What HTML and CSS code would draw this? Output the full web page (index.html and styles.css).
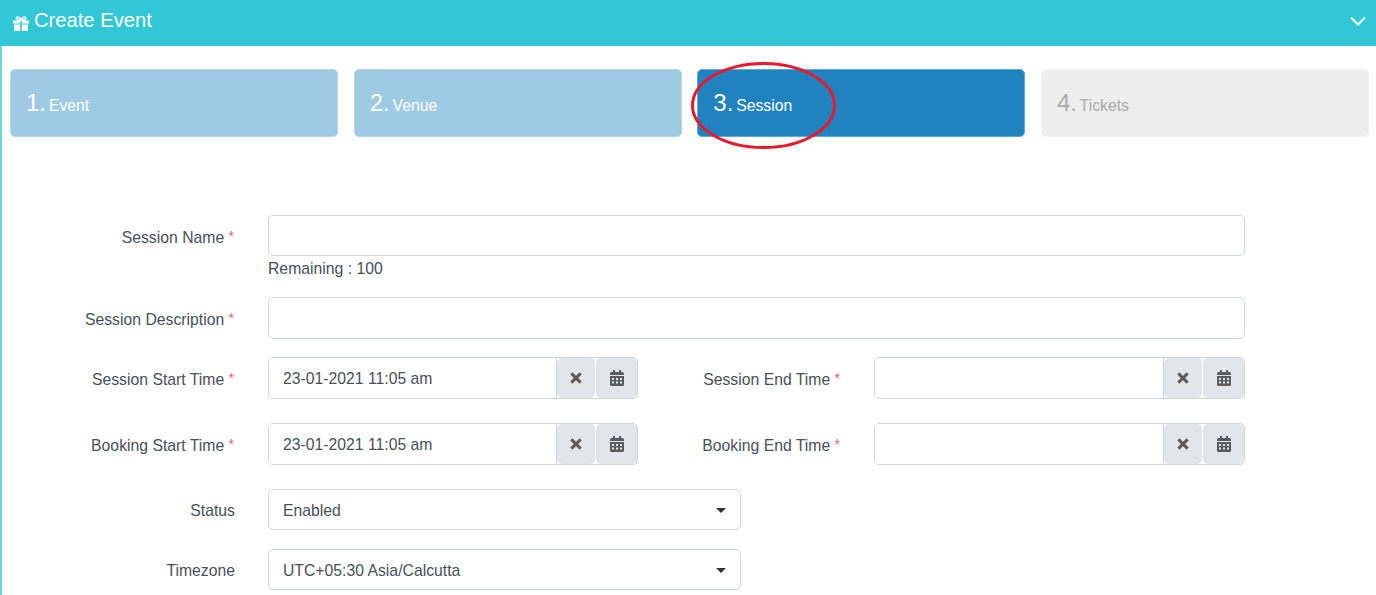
FILE: index.html
```html
<!DOCTYPE html>
<html lang="en">
<head>
<meta charset="utf-8">
<title>Create Event</title>
<link rel="stylesheet" href="styles.css">
</head>
<body>
<div class="panel">
  <header class="panel-head">
    <h1 class="panel-title">
      <svg class="gift" viewBox="0 0 16 15" aria-hidden="true"><path d="M0 4.4H7.2V7.6H0ZM8.8 4.4H16V7.6H8.8ZM1 8.6H7.2V15H2.2Q1 15 1 13.8ZM8.8 8.6H15V13.8Q15 15 13.8 15H8.8Z"/><path class="gift-bow" d="M8 4C6.8 1 3.8 0.2 3.3 2.2C2.9 3.8 5 4 8 4C11 4 13.1 3.8 12.7 2.2C12.2 0.2 9.2 1 8 4Z"/></svg>
      Create Event
    </h1>
    <svg class="chevron" viewBox="0 0 16 10" aria-hidden="true"><path d="M1 1.5L8 8.5L15 1.5"/></svg>
  </header>

  <nav class="steps">
    <div class="step step-done"><span class="step-num">1.</span> Event</div>
    <div class="step step-done"><span class="step-num">2.</span> Venue</div>
    <div class="step step-active"><span class="step-num">3.</span> Session</div>
    <div class="step step-todo"><span class="step-num">4.</span> Tickets</div>
  </nav>

  <svg class="annotation" viewBox="0 0 148 90" aria-hidden="true"><ellipse cx="73.5" cy="45.5" rx="71" ry="42"/></svg>

  <form class="form">
    <div class="row row-name">
      <label class="label">Session Name <i class="req">*</i></label>
      <div class="field-full">
        <input class="input input-name" type="text">
        <div class="help">Remaining : 100</div>
      </div>
    </div>
    <div class="row row-desc">
      <label class="label">Session Description <i class="req">*</i></label>
      <input class="input input-tall field-full" type="text">
    </div>
    <div class="row row-time">
      <label class="label">Session Start Time <i class="req">*</i></label>
      <div class="picker">
        <input class="picker-input" type="text" value="23-01-2021 11:05 am">
        <span class="addon addon-clear"><svg class="icon" viewBox="0 0 12 12"><path class="x" d="M2 2L10 10M10 2L2 10"/></svg></span>
        <span class="addon addon-cal"><svg class="icon" viewBox="0 0 14 16"><path d="M3 0H5V2H9V0H11V2H12.5Q14 2 14 3.5V5H0V3.5Q0 2 1.5 2H3ZM0 6H14V14.5Q14 16 12.5 16H1.5Q0 16 0 14.5ZM2 8V10H4V8ZM6 8V10H8V8ZM10 8V10H12V8ZM2 11.5V13.5H4V11.5ZM6 11.5V13.5H8V11.5ZM10 11.5V13.5H12V11.5Z" fill-rule="evenodd"/></svg></span>
      </div>
      <label class="label label-end">Session End Time <i class="req">*</i></label>
      <div class="picker picker-end">
        <input class="picker-input" type="text">
        <span class="addon addon-clear"><svg class="icon" viewBox="0 0 12 12"><path class="x" d="M2 2L10 10M10 2L2 10"/></svg></span>
        <span class="addon addon-cal"><svg class="icon" viewBox="0 0 14 16"><path d="M3 0H5V2H9V0H11V2H12.5Q14 2 14 3.5V5H0V3.5Q0 2 1.5 2H3ZM0 6H14V14.5Q14 16 12.5 16H1.5Q0 16 0 14.5ZM2 8V10H4V8ZM6 8V10H8V8ZM10 8V10H12V8ZM2 11.5V13.5H4V11.5ZM6 11.5V13.5H8V11.5ZM10 11.5V13.5H12V11.5Z" fill-rule="evenodd"/></svg></span>
      </div>
    </div>
    <div class="row row-time">
      <label class="label">Booking Start Time <i class="req">*</i></label>
      <div class="picker">
        <input class="picker-input" type="text" value="23-01-2021 11:05 am">
        <span class="addon addon-clear"><svg class="icon" viewBox="0 0 12 12"><path class="x" d="M2 2L10 10M10 2L2 10"/></svg></span>
        <span class="addon addon-cal"><svg class="icon" viewBox="0 0 14 16"><path d="M3 0H5V2H9V0H11V2H12.5Q14 2 14 3.5V5H0V3.5Q0 2 1.5 2H3ZM0 6H14V14.5Q14 16 12.5 16H1.5Q0 16 0 14.5ZM2 8V10H4V8ZM6 8V10H8V8ZM10 8V10H12V8ZM2 11.5V13.5H4V11.5ZM6 11.5V13.5H8V11.5ZM10 11.5V13.5H12V11.5Z" fill-rule="evenodd"/></svg></span>
      </div>
      <label class="label label-end">Booking End Time <i class="req">*</i></label>
      <div class="picker picker-end">
        <input class="picker-input" type="text">
        <span class="addon addon-clear"><svg class="icon" viewBox="0 0 12 12"><path class="x" d="M2 2L10 10M10 2L2 10"/></svg></span>
        <span class="addon addon-cal"><svg class="icon" viewBox="0 0 14 16"><path d="M3 0H5V2H9V0H11V2H12.5Q14 2 14 3.5V5H0V3.5Q0 2 1.5 2H3ZM0 6H14V14.5Q14 16 12.5 16H1.5Q0 16 0 14.5ZM2 8V10H4V8ZM6 8V10H8V8ZM10 8V10H12V8ZM2 11.5V13.5H4V11.5ZM6 11.5V13.5H8V11.5ZM10 11.5V13.5H12V11.5Z" fill-rule="evenodd"/></svg></span>
      </div>
    </div>
    <div class="row row-status">
      <label class="label label-plain">Status</label>
      <div class="select">Enabled<span class="caret"></span></div>
    </div>
    <div class="row">
      <label class="label label-plain">Timezone</label>
      <div class="select">UTC+05:30 Asia/Calcutta<span class="caret"></span></div>
    </div>
  </form>
</div>
</body>
</html>
```

FILE: styles.css
```css
* {
  box-sizing: border-box;
}

html,
body {
  margin: 0;
  height: 595px;
  overflow: hidden;
  background: #fff;
}

body {
  font-family: "Liberation Sans", Arial, sans-serif;
  font-size: 15.75px;
  color: #495057;
}

.panel {
  position: relative;
  height: 595px;
  border-left: 2px solid #6fd6e0;
}

.panel-head {
  display: flex;
  align-items: center;
  justify-content: space-between;
  height: 46px;
  margin-left: -2px;
  padding: 0 10px 5px 13px;
  background: #32c7d6;
  color: #fff;
}

.panel-title {
  display: flex;
  align-items: center;
  gap: 5px;
  margin: 0;
  font-size: 20.2px;
  font-weight: 400;
}

.gift {
  width: 16px;
  height: 15px;
  margin-top: 5px;
  fill: #fff;
}

.gift-bow {
  fill: none;
  stroke: #fff;
  stroke-width: 1.7;
}

.chevron {
  width: 16px;
  height: 10px;
  fill: none;
  stroke: #fff;
  stroke-width: 2;
}

.steps {
  display: flex;
  gap: 15.67px;
  padding: 23px 7px 0 8px;
}

.step {
  flex: 1;
  height: 68px;
  padding: 17px 15px 0;
  border: 1px solid transparent;
  border-radius: 5px;
  font-size: 15.75px;
  line-height: 32px;
  color: #fff;
}

.step-num {
  margin-right: -1.5px;
  font-size: 24px;
}

.step-done {
  background: #9ecae3;
  border-color: #b4d6ea;
}

.step-active {
  background: #2083c0;
  border-color: #5fa9d8;
}

.step-todo {
  background: #eeeeee;
  border-color: #f2f2f2;
  color: #aaaaaa;
}

.annotation {
  position: absolute;
  left: 688px;
  top: 60px;
  width: 148px;
  height: 90px;
  fill: none;
  stroke: #e8192c;
  stroke-width: 3;
}

.form {
  padding-top: 78px;
}

.row {
  display: flex;
  align-items: flex-start;
}

.row-name {
  height: 82px;
}

.row-desc {
  height: 60px;
}

.row-time {
  height: 66px;
}

.row-status {
  height: 60px;
}

.label {
  flex: none;
  width: 232px;
  margin-right: 34px;
  padding-top: 12px;
  line-height: 18px;
  text-align: right;
}

.label-plain {
  width: 233px;
  margin-right: 33px;
  padding-top: 13px;
}

.label-end {
  width: 202px;
  margin-right: 34px;
}

.req {
  font-style: normal;
  font-size: 14px;
  color: #e8606b;
  vertical-align: 2px;
}

.field-full {
  width: 977px;
}

.input {
  display: block;
  width: 100%;
  height: 41px;
  border: 1px solid #ced4da;
  border-radius: 5px;
  background: #fff;
}

.input-tall {
  height: 42px;
  width: 977px;
}

.help {
  margin-top: 4px;
  line-height: 18px;
}

.picker {
  display: flex;
  flex: none;
  width: 370px;
  height: 42px;
  border: 1px solid #ced4da;
  border-radius: 5px;
  overflow: hidden;
}

.picker-end {
  width: 371px;
}

.picker-input {
  flex: 1;
  min-width: 0;
  padding: 2px 14px 0;
  border: 0;
  border-right: 1px solid #ced4da;
  font: inherit;
  color: #495057;
  background: #fff;
}

.addon {
  display: flex;
  align-items: center;
  justify-content: center;
  flex: none;
  height: 100%;
  border-radius: 5px;
  background: #e1e5ec;
}

.addon-clear {
  width: 38px;
  margin-right: 1px;
}

.addon-cal {
  width: 41px;
}

.icon {
  fill: #5c5c5c;
}

.addon-clear .icon {
  width: 14px;
  height: 14px;
}

.addon-cal .icon {
  width: 14px;
  height: 16px;
}

.x {
  fill: none;
  stroke: #5c5c5c;
  stroke-width: 2.6;
}

.select {
  display: flex;
  align-items: center;
  justify-content: space-between;
  width: 473px;
  height: 41px;
  padding: 2px 14px 0;
  border: 1px solid #ced4da;
  border-radius: 5px;
  color: #495057;
}

.caret {
  width: 0;
  height: 0;
  border-style: solid;
  border-width: 5px 5px 0;
  border-color: #333 transparent transparent;
}
```
